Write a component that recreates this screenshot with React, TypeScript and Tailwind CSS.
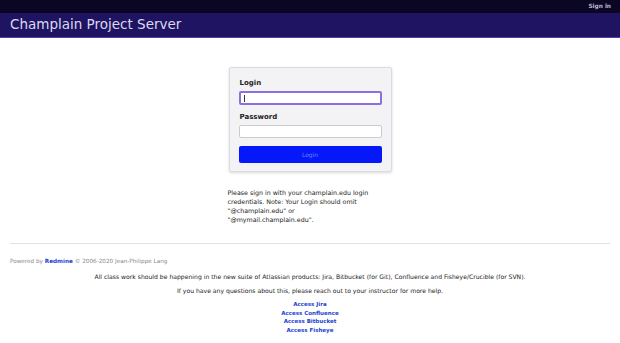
export default function App() {
  const f = { fontFamily: '"DejaVu Sans", Verdana, sans-serif' };
  return (
    <div className="w-[620px] h-[343px] bg-white overflow-hidden" style={f}>
      <div className="h-[13px] bg-[#0b0624] flex items-center justify-end pr-[9px]">
        <span className="text-[5.8px] font-bold text-[#bdb8d4]">Sign in</span>
      </div>
      <div className="h-[25px] bg-[#1f1461] border-b border-[#5a3bb5] flex items-center pl-[10px]">
        <span className="text-[13.5px] text-[#dcd8f0] leading-none">Champlain Project Server</span>
      </div>
      <div className="flex flex-col items-center pt-[29px]">
        <div className="w-[163px] bg-[#f3f3f5] border border-[#dcdce0] rounded-[2px] shadow-[0_1px_3px_rgba(0,0,0,0.15)] px-[9px] pt-[9px] pb-[8px]">
          <div className="text-[7px] font-bold text-[#222] leading-[12px] pl-[1px]">Login</div>
          <div className="mt-[2px] h-[14px] bg-white border-2 border-[#8c70e0] rounded-[2px] flex items-center pl-[3px]">
            <div className="w-px h-[7px] bg-[#333]" />
          </div>
          <div className="mt-[6px] text-[7px] font-bold text-[#222] leading-[12px] pl-[1px]">Password</div>
          <div className="mt-[2px] h-[13px] bg-white border border-[#ccc] rounded-[2px]" />
          <div className="mt-[8px] h-[17px] bg-[#0418fa] rounded-[2px] flex items-center justify-center text-[6px] text-[#6a82ff]">Login</div>
        </div>
        <div className="w-[157px] mt-[16px] ml-[-8px] text-[6.3px] leading-[9px] text-[#222]">
          Please sign in with your champlain.edu login credentials. Note: Your Login should omit "@champlain.edu" or
          <br />
          "@mymail.champlain.edu".
        </div>
      </div>
      <div className="mx-[10px] mt-[19px] border-t border-[#e2e2e6]" />
      <div className="pl-[10px] mt-[13px] text-[5.7px] text-[#8a8a8a] leading-[8px]">
        Powered by <span className="font-bold text-[#1d3fd0]">Redmine</span> © 2006-2020 Jean-Philippe Lang
      </div>
      <div className="mt-[8px] text-center text-[6.1px] text-[#222] leading-[8px]">
        All class work should be happening in the new suite of Atlassian products: Jira, Bitbucket (for Git), Confluence and Fisheye/Crucible (for SVN).
      </div>
      <div className="mt-[6px] text-center text-[6.1px] text-[#222] leading-[8px]">
        If you have any questions about this, please reach out to your instructor for more help.
      </div>
      <div className="mt-[5px] flex flex-col items-center text-[5.5px] font-bold text-[#1d3fd0] leading-[8.7px]">
        <span>Access Jira</span>
        <span>Access Confluence</span>
        <span>Access Bitbucket</span>
        <span>Access Fisheye</span>
      </div>
    </div>
  );
}
